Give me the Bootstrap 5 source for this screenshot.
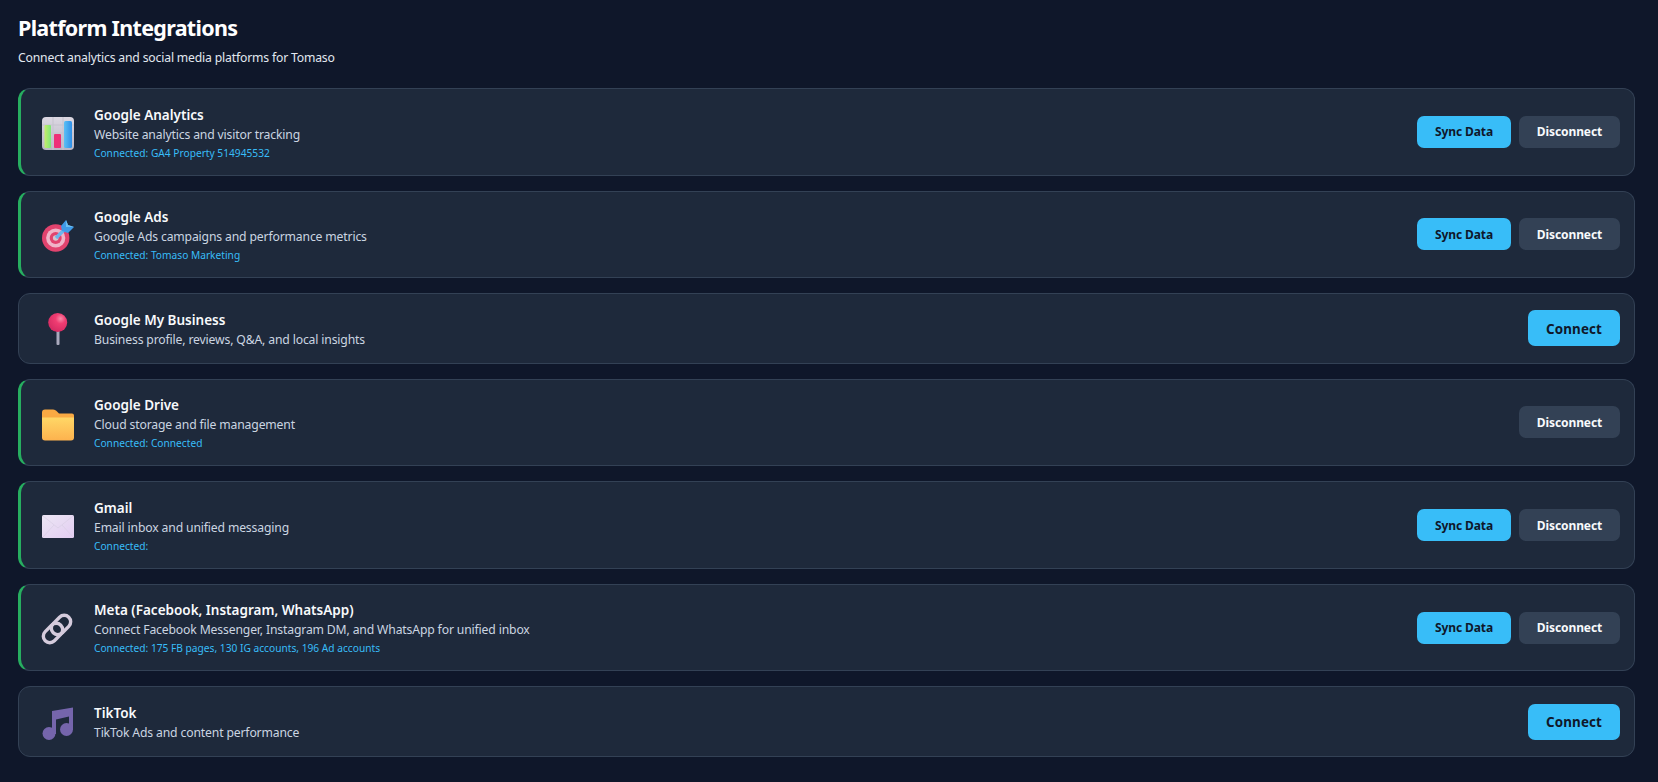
<!DOCTYPE html>
<html lang="en">
<head>
    <meta charset="UTF-8">
    <meta name="viewport" content="width=device-width, initial-scale=1.0">
    <title>Platform Integrations</title>
    <link href="https://cdn.jsdelivr.net/npm/bootstrap@5.3.0/dist/css/bootstrap.min.css" rel="stylesheet">
    <style>
        body { background: #0f172a; color: #f8fafc; font-family: "Noto Sans", "Open Sans", sans-serif; }
        .page-wrap { padding: 13px 23px 24px 18px; }
        .page-title { font-size: 21.5px; font-weight: 700; letter-spacing: -.7px; line-height: 30px; margin: 0 0 6px; color: #fff; }
        .page-sub { font-size: 12.2px; letter-spacing: -.17px; line-height: 18px; color: #e2e8f0; margin: 0 0 21px; }
        .int-list { display: flex; flex-direction: column; gap: 15px; }
        .int-item { background: #1e293b; border: 1px solid #334155; border-radius: 12px; padding: 15px 14px 15px 20px; min-height: 70.5px; }
        .int-item.is-on { border-left: 3px solid #27ae60; }
        .int-item:not(.is-on) { padding-left: 22px; }
        .int-icon { width: 34px; height: 34px; flex: 0 0 34px; margin-right: 19px; display: block; overflow: visible; }
        .int-text { margin-top: 1.5px; margin-bottom: -1.5px; }
        .int-name { font-size: 13.5px; font-weight: 600; line-height: 18px; margin-bottom: 2px; color: #f8fafc; }
        .int-desc { font-size: 12.2px; letter-spacing: -.15px; line-height: 18px; color: #cbd5e1; }
        .int-conn { font-size: 10.2px; line-height: 15.6px; margin-top: 2px; color: #38bdf8; }
        .act-btn { border: 0; border-radius: 7px; font-weight: 700; padding: 1px 0 0; font-size: 12px; letter-spacing: -.1px; height: 32px; }
        .act-sync { width: 94px; background: #38bdf8; color: #0f172a; }
        .act-off { width: 101px; background: #334155; color: #f8fafc; }
        .act-on { width: 92px; height: 36px; font-size: 13.4px; letter-spacing: .12px; background: #38bdf8; color: #0f172a; }
    </style>
</head>
<body>
    <div class="page-wrap">
        <h1 class="page-title">Platform Integrations</h1>
        <p class="page-sub">Connect analytics and social media platforms for Tomaso</p>

        <div class="int-list">
            <div class="int-item is-on d-flex align-items-center">
                <svg class="int-icon" viewBox="0 0 34 34">
                    <defs>
                        <linearGradient id="chartBg" x1="0" y1="0" x2="0" y2="1"><stop offset="0" stop-color="#dcd8e2"/><stop offset="1" stop-color="#b9b6c4"/></linearGradient>
                        <linearGradient id="barGreen" x1="0" y1="0" x2="1" y2="0"><stop offset="0" stop-color="#c4ec6a"/><stop offset="1" stop-color="#7fe87a"/></linearGradient>
                        <linearGradient id="barBlue" x1="0" y1="0" x2="1" y2="0"><stop offset="0" stop-color="#5cc0f5"/><stop offset="1" stop-color="#2f8fe8"/></linearGradient>
                    </defs>
                    <rect x="1" y="2" width="32" height="33" rx="4" fill="url(#chartBg)"/>
                    <path d="M1 10h32M1 18h32M1 26h32M12 2v33M22 2v33" stroke="#c6c3ce" stroke-width="1"/>
                    <rect x="3.500" y="10" width="6.500" height="23" rx="1" fill="url(#barGreen)"/>
                    <rect x="13" y="19" width="7" height="14" rx="1" fill="#ee2f78"/>
                    <rect x="23" y="6" width="8" height="27" rx="1.500" fill="url(#barBlue)"/>
                </svg>
                <div class="flex-grow-1 int-text">
                    <div class="int-name">Google Analytics</div>
                    <div class="int-desc">Website analytics and visitor tracking</div>
                    <div class="int-conn">Connected: GA4 Property 514945532</div>
                </div>
                <div class="d-flex gap-2">
                    <button class="act-btn act-sync">Sync Data</button>
                    <button class="act-btn act-off">Disconnect</button>
                </div>
            </div>

            <div class="int-item is-on d-flex align-items-center">
                <svg class="int-icon" viewBox="0 0 34 34">
                    <circle cx="14.700" cy="21" r="13.700" fill="#e2436e"/>
                    <circle cx="14.700" cy="21" r="9.600" fill="#f0b4c8"/>
                    <circle cx="14.700" cy="21" r="6" fill="#e2436e"/>
                    <circle cx="14.700" cy="21" r="2.800" fill="#d9c3cc"/>
                    <path d="M15 21 26 10" stroke="#6db5ec" stroke-width="3.500"/>
                    <path d="M20 9 25 3 27 8 33 10 27 16 21 14z" fill="#3f9ae8"/>
                    <path d="M25 3 27 8 33 10 25 10z" fill="#6cc0f2"/>
                </svg>
                <div class="flex-grow-1 int-text">
                    <div class="int-name">Google Ads</div>
                    <div class="int-desc">Google Ads campaigns and performance metrics</div>
                    <div class="int-conn">Connected: Tomaso Marketing</div>
                </div>
                <div class="d-flex gap-2">
                    <button class="act-btn act-sync">Sync Data</button>
                    <button class="act-btn act-off">Disconnect</button>
                </div>
            </div>

            <div class="int-item d-flex align-items-center">
                <svg class="int-icon" viewBox="0 0 34 34">
                    <defs><radialGradient id="pinHead" cx=".65" cy=".3" r=".75"><stop offset="0" stop-color="#f88aa8"/><stop offset=".35" stop-color="#f03d72"/><stop offset="1" stop-color="#d42a62"/></radialGradient></defs>
                    <rect x="15.500" y="17" width="3" height="17" rx="1" fill="#a9a9bd"/>
                    <circle cx="16.700" cy="11.500" r="9.500" fill="url(#pinHead)"/>
                </svg>
                <div class="flex-grow-1 int-text">
                    <div class="int-name">Google My Business</div>
                    <div class="int-desc">Business profile, reviews, Q&amp;A, and local insights</div>
                </div>
                <button class="act-btn act-on">Connect</button>
            </div>

            <div class="int-item is-on d-flex align-items-center">
                <svg class="int-icon" viewBox="0 0 34 34">
                    <defs><linearGradient id="folderBody" x1="0" y1="0" x2="0" y2="1"><stop offset="0" stop-color="#ffd766"/><stop offset="1" stop-color="#fdb24e"/></linearGradient></defs>
                    <path d="M1 7.500a3 3 0 0 1 3-3h8c2 0 3 1 4 2l2 2h13a2 2 0 0 1 2 2v5H1z" fill="#f9a943"/>
                    <path d="M1 12.500h32V32.500a3 3 0 0 1-3 3H4a3 3 0 0 1-3-3z" fill="url(#folderBody)"/>
                </svg>
                <div class="flex-grow-1 int-text">
                    <div class="int-name">Google Drive</div>
                    <div class="int-desc">Cloud storage and file management</div>
                    <div class="int-conn">Connected: Connected</div>
                </div>
                <button class="act-btn act-off">Disconnect</button>
            </div>

            <div class="int-item is-on d-flex align-items-center">
                <svg class="int-icon" viewBox="0 0 34 34">
                    <defs><linearGradient id="mailBody" x1="0" y1="0" x2="1" y2="1"><stop offset="0" stop-color="#ece6f4"/><stop offset="1" stop-color="#e3cdf2"/></linearGradient></defs>
                    <rect x="1" y="7" width="32" height="23" rx="1.500" fill="url(#mailBody)"/>
                    <path d="M2 8 17 20 32 8M2 29 13 17M32 29 21 17" stroke="#d8cfe4" stroke-width=".7" fill="none"/>
                </svg>
                <div class="flex-grow-1 int-text">
                    <div class="int-name">Gmail</div>
                    <div class="int-desc">Email inbox and unified messaging</div>
                    <div class="int-conn">Connected:</div>
                </div>
                <div class="d-flex gap-2">
                    <button class="act-btn act-sync">Sync Data</button>
                    <button class="act-btn act-off">Disconnect</button>
                </div>
            </div>

            <div class="int-item is-on d-flex align-items-center">
                <svg class="int-icon" viewBox="0 0 34 34">
                    <g fill="none" stroke="#d5cbdc" stroke-width="3.400">
                        <rect x="13.500" y="3" width="13" height="22" rx="6.500" transform="rotate(45 20 14)"/>
                        <rect x="5.500" y="11" width="13" height="22" rx="6.500" transform="rotate(45 12 22)"/>
                    </g>
                </svg>
                <div class="flex-grow-1 int-text">
                    <div class="int-name">Meta (Facebook, Instagram, WhatsApp)</div>
                    <div class="int-desc">Connect Facebook Messenger, Instagram DM, and WhatsApp for unified inbox</div>
                    <div class="int-conn">Connected: 175 FB pages, 130 IG accounts, 196 Ad accounts</div>
                </div>
                <div class="d-flex gap-2">
                    <button class="act-btn act-sync">Sync Data</button>
                    <button class="act-btn act-off">Disconnect</button>
                </div>
            </div>

            <div class="int-item d-flex align-items-center">
                <svg class="int-icon" viewBox="0 0 34 34">
                    <g fill="#7565ac">
                        <path d="M11 6 32 2.500V25h-4V11.500L15 14.500V29h-4z"/>
                        <circle cx="8" cy="28.500" r="6.500"/>
                        <circle cx="25.500" cy="24.500" r="6.500"/>
                    </g>
                </svg>
                <div class="flex-grow-1 int-text">
                    <div class="int-name">TikTok</div>
                    <div class="int-desc">TikTok Ads and content performance</div>
                </div>
                <button class="act-btn act-on">Connect</button>
            </div>
        </div>
    </div>

    <script src="https://cdn.jsdelivr.net/npm/bootstrap@5.3.0/dist/js/bootstrap.bundle.min.js"></script>
</body>
</html>
